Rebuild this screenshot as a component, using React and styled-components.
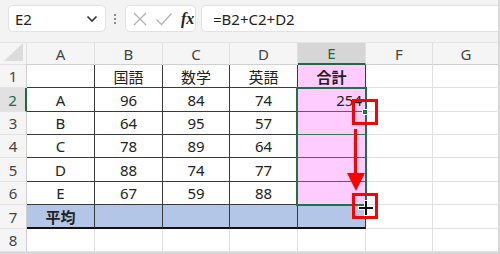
import React from "react";
import styled, { createGlobalStyle } from "styled-components";

const GlobalStyle = createGlobalStyle`
  html, body {
    margin: 0;
    padding: 0;
    background: #ffffff;
  }
  * {
    box-sizing: border-box;
  }
`;

const COLS = [27, 68, 68, 67, 68, 68, 67, 67];
const ROWS = [22, 23, 24, 23, 23, 24, 23, 24, 23];
const LETTERS = ["A", "B", "C", "D", "E", "F", "G"];

const table = [
  ["", "国語", "数学", "英語", "合計"],
  ["A", "96", "84", "74", "254"],
  ["B", "64", "95", "57", ""],
  ["C", "78", "89", "64", ""],
  ["D", "88", "74", "77", ""],
  ["E", "67", "59", "88", ""],
  ["平均", "", "", "", ""],
];

const App = () => {
  return (
    <Frame>
      <GlobalStyle />
      <Toolbar>
        <NameBox>
          <span>E2</span>
          <svg width="12" height="8" viewBox="0 0 12 8">
            <path d="M1.5 1.5 L6 6 L10.5 1.5" fill="none" stroke="#333" strokeWidth="1.6" />
          </svg>
        </NameBox>
        <Dots>
          <i />
          <i />
          <i />
        </Dots>
        <FxBox>
          <svg width="16" height="16" viewBox="0 0 16 16">
            <path d="M2 2 L14 14 M14 2 L2 14" stroke="#b4b4b4" strokeWidth="1.3" />
          </svg>
          <svg width="18" height="16" viewBox="0 0 18 16">
            <path d="M1.5 8.5 L6.5 13.5 L16.5 2.5" fill="none" stroke="#b4b4b4" strokeWidth="1.3" />
          </svg>
          <FxLabel>fx</FxLabel>
        </FxBox>
        <FormulaInput>=B2+C2+D2</FormulaInput>
      </Toolbar>
      <Sheet>
        <Corner>
          <svg width="20" height="19" viewBox="0 0 20 19">
            <path d="M19 0 L19 18 L0 18 Z" fill="#dcdcdc" />
          </svg>
        </Corner>
        {LETTERS.map((l) => (
          <ColHead key={l} $active={l === "E"}>
            {l}
          </ColHead>
        ))}
        {Array.from({ length: 8 }).map((_, r) => (
          <React.Fragment key={r}>
            <RowHead $active={r === 1}>{r + 1}</RowHead>
            {LETTERS.map((l, c) => {
              const inTable = r < 7 && c < 5;
              const text = inTable ? table[r][c] : "";
              return (
                <Cell
                  key={l}
                  $table={inTable}
                  $pink={c === 4 && r < 6}
                  $blue={r === 6 && c < 5}
                  $bold={(r === 0 && c === 4) || (r === 6 && c === 0)}
                  $right={r === 1 && c === 4}
                  $green={c === 4 && r >= 1 && r < 5}
                  $thickBottom={r === 6 && c < 5}
                >
                  {text}
                </Cell>
              );
            })}
          </React.Fragment>
        ))}
        <Selection />
        <FillHandle />
        <RedBox $top={56} />
        <ArrowLine />
        <ArrowHead>
          <svg width="18" height="18" viewBox="0 0 18 18">
            <path d="M0 0 L18 0 L9 18 Z" fill="#ff0000" />
          </svg>
        </ArrowHead>
        <RedBox $top={150} />
        <CrossCursor>
          <svg width="16" height="16" viewBox="0 0 16 16">
            <path d="M8 0 V16 M0 8 H16" stroke="#ffffff" strokeWidth="4" />
            <path d="M8 1 V15 M1 8 H15" stroke="#111" strokeWidth="2" />
          </svg>
        </CrossCursor>
      </Sheet>
    </Frame>
  );
};
export default App;

const Frame = styled.div`
  width: 500px;
  height: 254px;
  overflow: hidden;
  background: #ffffff;
  border-right: 2px solid #d8d8d8;
  border-bottom: 2px solid #d8d8d8;
  font-family: "Noto Sans", "Noto Sans CJK JP", sans-serif;
  color: #222;
`;

const Toolbar = styled.div`
  display: flex;
  align-items: center;
  height: 43px;
  padding: 0 0 5px 8px;
  background: #f3f3f3;
  border-bottom: 1px solid #e3e3e3;
`;

const NameBox = styled.div`
  display: flex;
  align-items: center;
  justify-content: space-between;
  width: 98px;
  height: 27px;
  padding: 0 7px 0 6px;
  background: #ffffff;
  border: 1px solid #e2e2e2;
  border-radius: 5px;
  font-size: 15px;
  color: #222;
`;

const Dots = styled.div`
  display: flex;
  flex-direction: column;
  gap: 2px;
  margin: 0 9px 0 8px;

  i {
    display: block;
    width: 2px;
    height: 2px;
    background: #8a8a8a;
  }
`;

const FxBox = styled.div`
  display: flex;
  align-items: center;
  gap: 7px;
  width: 71px;
  height: 27px;
  padding: 0 0 0 6px;
  background: #ffffff;
  border: 1px solid #e2e2e2;
  border-radius: 5px;
`;

const FxLabel = styled.span`
  font-family: "Liberation Serif", serif;
  font-style: italic;
  font-weight: bold;
  font-size: 16px;
  color: #222;
  margin-left: 1px;
`;

const FormulaInput = styled.div`
  flex: 1;
  height: 27px;
  margin-left: 5px;
  padding: 1px 0 0 11px;
  background: #ffffff;
  border: 1px solid #e2e2e2;
  border-right: none;
  border-radius: 5px 0 0 5px;
  font-size: 15px;
  line-height: 24px;
  color: #222;
`;

const Sheet = styled.div`
  position: relative;
  display: grid;
  grid-template-columns: ${COLS.map((w) => w + "px").join(" ")};
  grid-template-rows: ${ROWS.map((h) => h + "px").join(" ")};
  font-size: 15px;
`;

const Corner = styled.div`
  display: flex;
  align-items: flex-end;
  justify-content: flex-end;
  padding: 0 2px 2px 0;
  background: #f5f5f5;
  border-right: 1px solid #e0e0e0;
  border-bottom: 1px solid #e0e0e0;
`;

const ColHead = styled.div`
  display: flex;
  align-items: center;
  justify-content: center;
  background: ${(p) => (p.$active ? "#d6d6d6" : "#f5f5f5")};
  color: ${(p) => (p.$active ? "#1d6b3f" : "#444")};
  border-right: 1px solid #e0e0e0;
  border-bottom: ${(p) => (p.$active ? "2px solid #1d6b3f" : "1px solid #d0d0d0")};
  font-size: 15px;
`;

const RowHead = styled.div`
  display: flex;
  align-items: center;
  justify-content: center;
  background: ${(p) => (p.$active ? "#e1e1e1" : "#f5f5f5")};
  color: ${(p) => (p.$active ? "#1d6b3f" : "#444")};
  border-right: ${(p) => (p.$active ? "2px solid #1d6b3f" : "1px solid #d0d0d0")};
  border-bottom: 1px solid #e3e3e3;
  font-size: 15px;
`;

const Cell = styled.div`
  display: flex;
  align-items: center;
  justify-content: ${(p) => (p.$right ? "flex-end" : "center")};
  padding: ${(p) => (p.$right ? "0 3px 0 0" : "0")};
  background: ${(p) => (p.$blue ? "#b4c6e7" : p.$pink ? "#ffccff" : "#ffffff")};
  border-right: 1px solid ${(p) => (p.$table ? "#3a3a3a" : "#e1e1e1")};
  border-bottom: ${(p) =>
    p.$thickBottom
      ? "2px solid #111"
      : p.$green
      ? "1px solid #2e7a4c"
      : p.$table
      ? "1px solid #3a3a3a"
      : "1px solid #e1e1e1"};
  font-weight: ${(p) => (p.$bold ? "bold" : "normal")};
  color: #222;
  white-space: nowrap;
`;

const Selection = styled.div`
  position: absolute;
  left: 296px;
  top: 44px;
  width: 71px;
  height: 119px;
  border: 2px solid #1e7145;
  pointer-events: none;
`;

const FillHandle = styled.div`
  position: absolute;
  left: 362px;
  top: 66px;
  width: 6px;
  height: 6px;
  background: #1e7145;
  border: 1px solid #ffffff;
`;

const RedBox = styled.div`
  position: absolute;
  left: 352px;
  top: ${(p) => p.$top}px;
  width: 26px;
  height: 26px;
  border: 3px solid #ff0000;
`;

const ArrowLine = styled.div`
  position: absolute;
  left: 354px;
  top: 86px;
  width: 3px;
  height: 46px;
  background: #ff0000;
`;

const ArrowHead = styled.div`
  position: absolute;
  left: 347px;
  top: 130px;
  line-height: 0;
`;

const CrossCursor = styled.div`
  position: absolute;
  left: 358px;
  top: 157px;
  line-height: 0;
`;
